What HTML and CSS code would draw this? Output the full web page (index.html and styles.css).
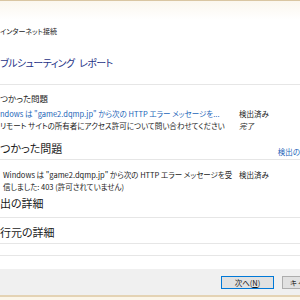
FILE: index.html
```html
<!doctype html>
<html lang="ja">
	<head>
		<meta charset="UTF-8" />
		<title>トラブルシューティング レポート</title>
		<link rel="stylesheet" href="styles.css">
	</head>
	<body>
		<div class="window">
			<div class="top-edge"></div>
			<div class="caption">インターネット接続</div>
			<h1 class="title">ブルシューティング レポート</h1>

			<div class="summary">
				<div class="summary-head">つかった問題</div>
				<div class="row">
					<span class="link">ndows は "game2.dqmp.jp" から次の HTTP エラー メッセージを...</span>
					<span>検出済み</span>
				</div>
				<div class="row">
					<span>リモート サイトの所有者にアクセス許可について問い合わせてください</span>
					<span class="done">完了</span>
				</div>
			</div>

			<div class="section-head">
				<span>つかった問題</span>
				<span class="link small">検出の詳細</span>
			</div>
			<div class="details">
				<div class="row">
					<span class="detail-text">Windows は "game2.dqmp.jp" から次の HTTP エラー メッセージを受<br>信しました: 403 (許可されていません)</span>
					<span>検出済み</span>
				</div>
			</div>

			<div class="section-head detect">出の詳細</div>
			<div class="section-head source">行元の詳細</div>
			<div class="empty-section"></div>

			<div class="footer">
				<button class="btn primary">次へ(<u>N</u>)</button>
				<button class="btn">キャンセル</button>
			</div>
			<div class="bottom-edge"></div>
		</div>
	</body>
</html>
```

FILE: styles.css
```css
body {
	margin: 0;
	background-color: #fff;
	font-family: "Noto Sans CJK JP", "Noto Sans", sans-serif;
	font-feature-settings: "palt";
	color: #1a1a1a;
}
.window {
	width: 300px;
	height: 300px;
	overflow: hidden;
	display: flex;
	flex-direction: column;
}
.top-edge {
	height: 19px;
	border-top: 1px solid #d9c6a2;
	background: linear-gradient(#fbf7ee, #fff);
}
.caption {
	height: 22px;
	line-height: 22px;
	font-size: 7px;
	white-space: nowrap;
}
.title {
	margin: 0;
	height: 42px;
	line-height: 42px;
	font-size: 10px;
	font-weight: normal;
	letter-spacing: -0.6px;
	word-spacing: 3px;
	color: #1e3287;
	white-space: nowrap;
	border-bottom: 1px solid #e6e6e6;
}
.summary {
	padding-top: 5px;
}
.summary-head {
	line-height: 16px;
	font-size: 8.5px;
	margin-bottom: 2px;
}
.row {
	display: grid;
	grid-template-columns: 239px 1fr;
	font-size: 7.5px;
	line-height: 12px;
	white-space: nowrap;
}
.link {
	color: #1a64b8;
}
.done {
	font-style: italic;
}
.section-head {
	display: flex;
	justify-content: space-between;
	align-items: flex-end;
	padding-top: 5px;
	line-height: 22px;
	font-size: 11px;
	white-space: nowrap;
	border-bottom: 1px solid #e6e6e6;
}
.section-head .small {
	font-size: 7.5px;
	line-height: 14px;
	margin-right: -15px;
}
.details {
	padding-top: 9px;
}
.detail-text {
	padding-left: 3px;
}
.section-head.detect {
	padding-top: 0;
	line-height: 20px;
	padding-bottom: 4px;
}
.section-head.source {
	padding-top: 3px;
}
.empty-section {
	height: 11px;
	border-bottom: 1px solid #e6e6e6;
}
.footer {
	margin-top: 13px;
	height: 26px;
	background-color: #f0f0f0;
	display: flex;
	align-items: flex-start;
	gap: 8px;
	padding-left: 221px;
	padding-top: 7px;
	box-sizing: border-box;
}
.btn {
	flex: none;
	width: 53px;
	height: 13px;
	padding: 0;
	font-family: inherit;
	font-size: 7.5px;
	line-height: 11px;
	color: #1a1a1a;
	background-color: #e1e1e1;
	border: 1px solid #adadad;
}
.btn.primary {
	border-color: #0078d7;
}
.bottom-edge {
	flex: 1;
	border-top: 2px solid #e4d3b4;
	background-color: #fbf6ea;
}
```
